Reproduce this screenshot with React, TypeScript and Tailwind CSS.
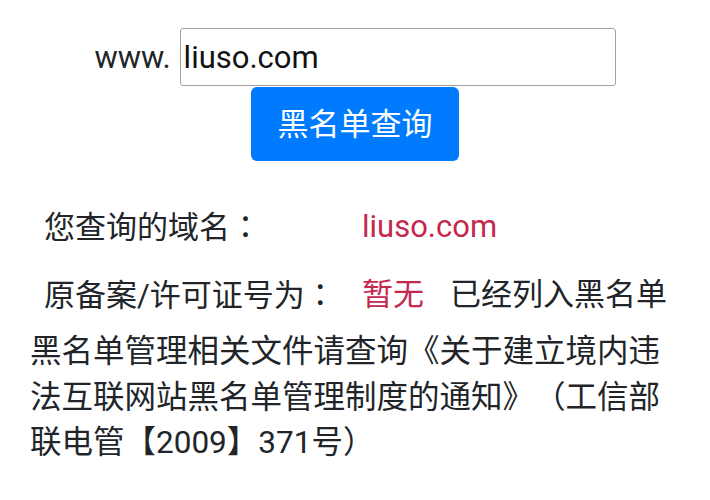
import React from "react";

export default function App() {
  const font = { fontFamily: 'Roboto, "Noto Sans CJK SC", sans-serif' };
  const colon = <span className="[font-family:'Noto_Sans_CJK_TC',sans-serif]">：</span>;
  return (
    <div className="w-[710px] h-[500px] bg-white text-[#212529] overflow-hidden [text-spacing-trim:space-all]" style={font}>
      <div className="pt-[28px] flex justify-center items-center">
        <span className="text-[31px] leading-none mr-[9px]">www.</span>
        <input
          readOnly
          value="liuso.com"
          className="w-[436px] h-[58px] border border-[#a3a3a3] rounded-[3px] pl-[3px] text-[31px] text-[#111] outline-none"
          style={font}
        />
      </div>
      <div className="flex justify-center mt-[1px]">
        <button className="w-[208px] h-[74px] bg-[#007bff] rounded-[6px] text-white text-[31px] leading-none">
          黑名单查询
        </button>
      </div>
      <div className="mt-[31px] pl-[44px] text-[31px]">
        <div className="flex items-center h-[68px] leading-[45px]">
          <span className="w-[318px]">您查询的域名{colon}</span>
          <span className="text-[#c4284f]">liuso.com</span>
        </div>
        <div className="flex items-center h-[68px] leading-[45px]">
          <span className="w-[318px]">原备案/许可证号为{colon}</span>
          <span className="text-[#c4284f] w-[88px]">暂无</span>
          <span>已经列入黑名单</span>
        </div>
      </div>
      <p className="mt-[1px] ml-[30px] w-[645px] text-[31.5px] leading-[45.5px]">
        黑名单管理相关文件请查询《关于建立境内违法互联网站黑名单管理制度的通知》（工信部联电管【2009】371号）
      </p>
    </div>
  );
}
